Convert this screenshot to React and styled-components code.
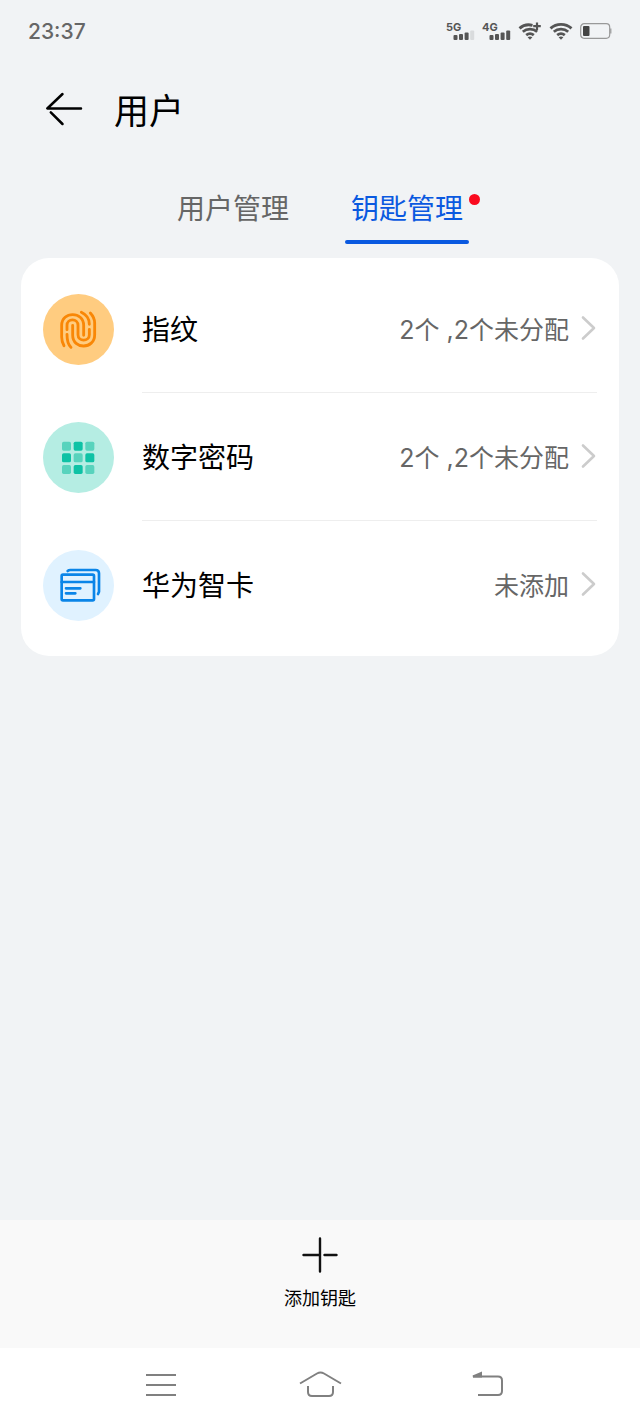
import React, { useState } from 'react'
import styled, { createGlobalStyle, ThemeProvider } from 'styled-components'

const theme = {
  background: '#f1f3f5',
  text: '#000',
  muted: '#666',
  active: '#0a59e0',
  fonts: {
    base: '"Noto Sans CJK SC", "Noto Sans", sans-serif',
    value: 'Inter, "Noto Sans CJK SC", sans-serif',
    status: 'Inter, Roboto, sans-serif',
  },
}

const GlobalStyle = createGlobalStyle`
  * { box-sizing: border-box; }
  body { margin: 0; }
  button {
    border: 0;
    padding: 0;
    background: none;
    font: inherit;
    color: inherit;
    cursor: pointer;
  }
  svg { display: block; flex: none; }
`

const Screen = styled.div`
  display: flex;
  flex-direction: column;
  min-height: 100vh;
  background: ${({ theme }) => theme.background};
  color: ${({ theme }) => theme.text};
  font-family: ${({ theme }) => theme.fonts.base};
`

const StatusBar = styled.div`
  display: flex;
  align-items: center;
  justify-content: space-between;
  height: 62px;
  padding: 0 28px;
  font-family: ${({ theme }) => theme.fonts.status};
  font-size: 21px;
  font-weight: 500;
  color: #666;
`

const StatusIcons = styled.div`
  display: flex;
  align-items: center;
  gap: 7px;
`

const Header = styled.header`
  display: flex;
  align-items: center;
  gap: 26px;
  height: 96px;
  padding: 0 40px;
`

const Title = styled.h1`
  margin: 0;
  padding-bottom: 2px;
  font-size: 35px;
  line-height: 48px;
  font-weight: 400;
`

const Tabs = styled.div`
  display: flex;
  justify-content: center;
  gap: 50px;
  margin-top: 16px;
`

const Tab = styled.button`
  position: relative;
  width: 124px;
  height: 70px;
  border-bottom: 4px solid transparent;
  font-size: 28px;
  line-height: 40px;
  white-space: nowrap;
  color: ${({ $active, theme }) => ($active ? theme.active : theme.muted)};
  &::after {
    content: '';
    display: ${({ $active }) => ($active ? 'block' : 'none')};
    position: absolute;
    left: 0;
    right: 0;
    bottom: -4px;
    height: 4px;
    border-radius: 2px;
    background: ${({ theme }) => theme.active};
  }
`

const Dot = styled.span`
  position: absolute;
  top: 20px;
  right: -11px;
  width: 11px;
  height: 11px;
  border-radius: 50%;
  background: #fa0a1e;
`

const Card = styled.ul`
  list-style: none;
  margin: 14px 21px 0;
  padding: 7px 22px;
  border-radius: 28px;
  background: #fff;
`

const Row = styled.button`
  display: flex;
  align-items: center;
  gap: 28px;
  width: 100%;
  text-align: left;
`

const RowBody = styled.span`
  display: flex;
  flex: 1;
  align-items: center;
  height: 128px;
  padding-bottom: 2px;
  border-bottom: 1px solid ${({ $last }) => ($last ? 'transparent' : '#eee')};
`

const RowLabel = styled.span`
  flex: 1;
  font-size: 28px;
`

const RowValue = styled.span`
  margin-right: 12px;
  font-family: ${({ theme }) => theme.fonts.value};
  font-size: 25px;
  color: ${({ theme }) => theme.muted};
`

const ActionBar = styled.div`
  display: flex;
  justify-content: center;
  align-items: flex-start;
  height: 128px;
  margin-top: auto;
  padding-top: 16px;
  background: #f9f9f9;
`

const AddButton = styled.button`
  display: flex;
  flex-direction: column;
  align-items: center;
  gap: 10px;
  font-size: 18px;
  line-height: 26px;
`

const SystemNav = styled.nav`
  display: flex;
  justify-content: center;
  align-items: center;
  gap: 108px;
  height: 74px;
  background: #fff;
`

const Signal = ({ label, weak }) => (
  <svg width="29" height="20" viewBox="0 0 29 20" fill="#555">
    <text x="0" y="10" fontFamily="Inter, sans-serif" fontSize="11" fontWeight="700">{label}</text>
    <rect x="7.500" y="14" width="4" height="5" rx="1" />
    <rect x="13" y="13" width="4" height="6" rx="1" />
    <rect x="18.600" y="11.500" width="4" height="7.500" rx="1" />
    <rect x="24.200" y="9.500" width="4" height="9.500" rx="1" fill={weak ? '#d9dbdd' : '#555'} />
  </svg>
)

const Wifi = ({ plus }) => (
  <svg width="24" height="20" viewBox="0 0 24 20" fill="none" stroke="#555" strokeWidth="2.800">
    <path d={plus ? 'M1.500 7.400C5 4.200 9.500 3 14.500 4.300' : 'M1.500 7.400C7.500 2 16.500 2 22.500 7.400'} />
    <path d="M4.800 10.800C9 7.200 15 7.200 19.200 10.800" />
    <path d="M8.200 14.200C10.500 12.300 13.500 12.300 15.800 14.200" />
    <path d="M9.600 16.200Q12 14.600 14.400 16.200L12 18.800Z" fill="#555" stroke="none" />
    {plus && <path d="M19 1.500v7.500M15.200 5.200h7.600" strokeWidth="2.200" />}
  </svg>
)

const Battery = () => (
  <svg width="32" height="18" viewBox="0 0 32 18">
    <rect x="0.700" y="1.700" width="29" height="14.600" rx="3.500" fill="none" stroke="#999" strokeWidth="1.200" />
    <rect x="3" y="4" width="6.500" height="10" rx="1" fill="#444" />
    <path d="M30.800 6.500v5" stroke="#999" strokeWidth="1.200" />
  </svg>
)

const BackArrow = () => (
  <svg width="48" height="40" viewBox="0 0 48 40" fill="none" stroke="#000" strokeWidth="2.500" strokeLinecap="round" strokeLinejoin="round">
    <path d="M22.500 4L7.300 18.500H41" />
    <path d="M10.800 22.300L22.500 34" />
  </svg>
)

const Fingerprint = () => (
  <svg width="71" height="71" viewBox="39 39 213 213">
    <circle cx="145.500" cy="145.500" r="106.500" fill="#ffcc80" />
    <g fill="none" stroke="#f98706" strokeWidth="8.500" strokeLinecap="round">
      <path d="M102 194Q95 182 95 168V133C95 90 161 90 161 133V163" />
      <path d="M111 146V133C111 111 144 111 144 133V161C144 183 178 183 178 161V145" />
      <path d="M128 133V163C128 206 194 206 194 161V126Q194 110 181 96" />
      <path d="M154 94Q178 105 178 130" />
      <path d="M111 160Q111 189 123 199" />
    </g>
  </svg>
)

const Keypad = () => (
  <svg width="71" height="71" viewBox="39 34 213 213">
    <circle cx="145.500" cy="140.500" r="106.500" fill="#b5ede3" />
    {[0, 1, 2, 3, 4, 5, 6, 7, 8].map(i => (
      <rect
        key={i}
        x={96 + (i % 3) * 35}
        y={93 + Math.floor(i / 3) * 35}
        width="27"
        height="27"
        rx="5"
        fill={i % 2 ? '#0ec2a5' : '#58d3bd'}
      />
    ))}
  </svg>
)

const SmartCard = () => (
  <svg width="71" height="71" viewBox="39 28 213 213">
    <circle cx="145.500" cy="134.500" r="106.500" fill="#e0f2ff" />
    <g fill="none" stroke="#0a85e8" strokeWidth="8" strokeLinecap="round" strokeLinejoin="round">
      <rect x="95" y="102" width="97" height="77" rx="4" />
      <path d="M95 124H192M108 143H151M108 158H136" />
      <path d="M113 91Q116 88 121 88H197Q207 88 207 98V153L204 160" />
    </g>
  </svg>
)

const Chevron = () => (
  <svg width="16" height="28" viewBox="0 0 16 28" fill="none" stroke="#ccc" strokeWidth="2.600" strokeLinecap="round" strokeLinejoin="round">
    <path d="M2 3.500L13 14L2 24.500" />
  </svg>
)

const Plus = () => (
  <svg width="38" height="38" viewBox="0 0 38 38" stroke="#111" strokeWidth="2.400" strokeLinecap="round">
    <path d="M19 2.500V35.500M2.500 19H19M23.500 19H35.500" />
  </svg>
)

const NavIcon = ({ children }) => (
  <svg width="56" height="32" viewBox="0 0 56 32" fill="none" stroke="#808080" strokeWidth="2">
    {children}
  </svg>
)

const rows = [
  { label: '指纹', value: '2个 ,2个未分配', Icon: Fingerprint },
  { label: '数字密码', value: '2个 ,2个未分配', Icon: Keypad },
  { label: '华为智卡', value: '未添加', Icon: SmartCard },
]

const App = () => {
  const [tab, setTab] = useState('keys')

  return (
    <ThemeProvider theme={theme}>
      <GlobalStyle />
      <Screen>
        <StatusBar>
          <span>23:37</span>
          <StatusIcons>
            <Signal label="5G" weak />
            <Signal label="4G" />
            <Wifi plus />
            <Wifi />
            <Battery />
          </StatusIcons>
        </StatusBar>
        <Header>
          <button aria-label="返回"><BackArrow /></button>
          <Title>用户</Title>
        </Header>
        <Tabs role="tablist">
          <Tab role="tab" aria-selected={tab === 'users'} $active={tab === 'users'} onClick={() => setTab('users')}>
            用户管理
          </Tab>
          <Tab role="tab" aria-selected={tab === 'keys'} $active={tab === 'keys'} onClick={() => setTab('keys')}>
            钥匙管理
            <Dot />
          </Tab>
        </Tabs>
        <Card>
          {rows.map(({ label, value, Icon }, i) => (
            <li key={label}>
              <Row>
                <Icon />
                <RowBody $last={i === rows.length - 1}>
                  <RowLabel>{label}</RowLabel>
                  <RowValue>{value}</RowValue>
                  <Chevron />
                </RowBody>
              </Row>
            </li>
          ))}
        </Card>
        <ActionBar>
          <AddButton>
            <Plus />
            添加钥匙
          </AddButton>
        </ActionBar>
        <SystemNav>
          <button aria-label="菜单">
            <NavIcon><path d="M18 6h30M18 16h30M18 26h30" /></NavIcon>
          </button>
          <button aria-label="主页">
            <NavIcon>
              <path d="M8 14.500L25 4.500Q28.500 2.500 32 4.500L49 14.500" />
              <path d="M16 17V23Q16 27 20 27H37Q41 27 41 23V17" />
            </NavIcon>
          </button>
          <button aria-label="后退">
            <NavIcon>
              <path d="M17 7.500H42Q46 7.500 46 11.500V22Q46 26 42 26H22" />
              <path d="M17 7.500L25 4V7.500Z" fill="#808080" />
            </NavIcon>
          </button>
        </SystemNav>
      </Screen>
    </ThemeProvider>
  )
}

export default App
